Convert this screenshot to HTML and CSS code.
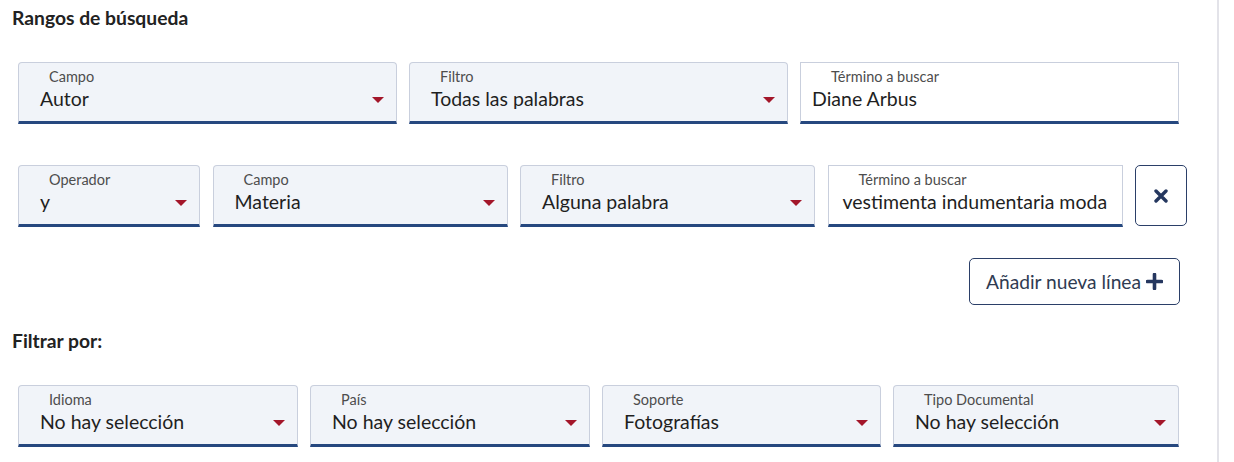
FILE: index.html
```html
<!DOCTYPE html>
<html lang="es">
<head>
<meta charset="utf-8">
<title>Búsqueda avanzada</title>
<link rel="stylesheet" href="styles.css">
</head>
<body>
<div class="page">
  <div class="content">
    <h2 class="section-title">Rangos de búsqueda</h2>

    <div class="row row-3">
      <div class="field select">
        <span class="label">Campo</span>
        <div class="value-line"><span class="value">Autor</span><span class="caret"></span></div>
      </div>
      <div class="field select">
        <span class="label">Filtro</span>
        <div class="value-line"><span class="value">Todas las palabras</span><span class="caret"></span></div>
      </div>
      <div class="field input">
        <span class="label">Término a buscar</span>
        <div class="value-line"><span class="value">Diane Arbus</span></div>
      </div>
    </div>

    <div class="row row-line">
      <div class="field select">
        <span class="label">Operador</span>
        <div class="value-line"><span class="value">y</span><span class="caret"></span></div>
      </div>
      <div class="field select">
        <span class="label">Campo</span>
        <div class="value-line"><span class="value">Materia</span><span class="caret"></span></div>
      </div>
      <div class="field select">
        <span class="label">Filtro</span>
        <div class="value-line"><span class="value">Alguna palabra</span><span class="caret"></span></div>
      </div>
      <div class="field input input-long">
        <span class="label">Término a buscar</span>
        <div class="value-line"><span class="value">vestimenta indumentaria moda</span></div>
      </div>
      <button class="remove-btn" type="button" aria-label="Eliminar línea">
        <svg width="14" height="14" viewBox="0 0 14 14"><path d="M2 2 L12 12 M12 2 L2 12" stroke="currentColor" stroke-width="3.4" stroke-linecap="round"/></svg>
      </button>
    </div>

    <div class="actions">
      <button class="add-btn" type="button">Añadir nueva línea
        <svg width="17" height="17" viewBox="0 0 17 17"><path d="M8.5 1.5 V15.5 M1.5 8.5 H15.5" stroke="currentColor" stroke-width="3.6" stroke-linecap="round"/></svg>
      </button>
    </div>

    <h2 class="section-title filter-title">Filtrar por:</h2>

    <div class="row row-4">
      <div class="field select">
        <span class="label">Idioma</span>
        <div class="value-line"><span class="value">No hay selección</span><span class="caret"></span></div>
      </div>
      <div class="field select">
        <span class="label">País</span>
        <div class="value-line"><span class="value">No hay selección</span><span class="caret"></span></div>
      </div>
      <div class="field select">
        <span class="label">Soporte</span>
        <div class="value-line"><span class="value">Fotografías</span><span class="caret"></span></div>
      </div>
      <div class="field select">
        <span class="label">Tipo Documental</span>
        <div class="value-line"><span class="value">No hay selección</span><span class="caret"></span></div>
      </div>
    </div>
  </div>
</div>
</body>
</html>
```

FILE: styles.css
```css
* { box-sizing: border-box; }

html, body {
  margin: 0;
  padding: 0;
  background: #fff;
}

body {
  font-family: Lato, "Open Sans", "Liberation Sans", sans-serif;
  color: #222;
}

.page {
  width: 1219px;
  height: 462px;
  border-right: 2px solid #e3e3e9;
  overflow: hidden;
}

.content {
  padding: 8px 0 0 12px;
}

.section-title {
  margin: 0;
  font-size: 19.3px;
  line-height: 20px;
  font-weight: 700;
  color: #222;
}

.filter-title {
  margin-top: 26px;
}

.row {
  display: grid;
  gap: 12px;
  margin-left: 6px;
  width: 1161px;
}

.row-3 {
  grid-template-columns: repeat(3, 1fr);
  margin-top: 34px;
}

.row-line {
  grid-template-columns: 182px 295px 295px 295px 52px;
  gap: 12.5px;
  width: 1170px;
  margin-top: 41px;
}

.row-4 {
  grid-template-columns: 280px 280px 279px 1fr;
  margin-top: 34px;
}

.field {
  height: 62px;
  border: 1px solid #c9cfdd;
  border-bottom: 3px solid #26487f;
  border-radius: 4px 4px 0 0;
  padding: 6px 12px 0 21px;
  display: flex;
  flex-direction: column;
}

.select { background: #f1f4f9; }
.input { background: #fff; border-radius: 0; }

.label {
  display: block;
  font-size: 14.5px;
  line-height: 16px;
  color: #4d4d4d;
  margin-left: 9px;
}

.value-line {
  display: flex;
  align-items: center;
  justify-content: space-between;
  height: 24px;
  margin-top: 2px;
}

.input .value-line { margin-left: -10px; }
.input-long .value-line { margin-left: -7px; }

.value {
  font-size: 19.5px;
  line-height: 24px;
  color: #1f1f1f;
  white-space: nowrap;
}

.caret {
  width: 0;
  height: 0;
  border-left: 6px solid transparent;
  border-right: 6px solid transparent;
  border-top: 6px solid #a3162a;
  margin-top: 2px;
}

.remove-btn {
  height: 61px;
  background: #fff;
  border: 1px solid #2b3f68;
  border-radius: 5px;
  color: #25375f;
  display: flex;
  align-items: center;
  justify-content: center;
  padding: 0;
}

.actions {
  display: flex;
  justify-content: flex-end;
  width: 1168px;
  margin-top: 31px;
}

.add-btn {
  height: 47px;
  width: 211px;
  background: #fff;
  border: 1px solid #2b3f68;
  border-radius: 5px;
  color: #2f3b52;
  font-family: inherit;
  font-size: 19.2px;
  display: flex;
  align-items: center;
  gap: 5px;
  padding: 0 0 0 16px;
}

.add-btn svg { color: #25375f; }
```
